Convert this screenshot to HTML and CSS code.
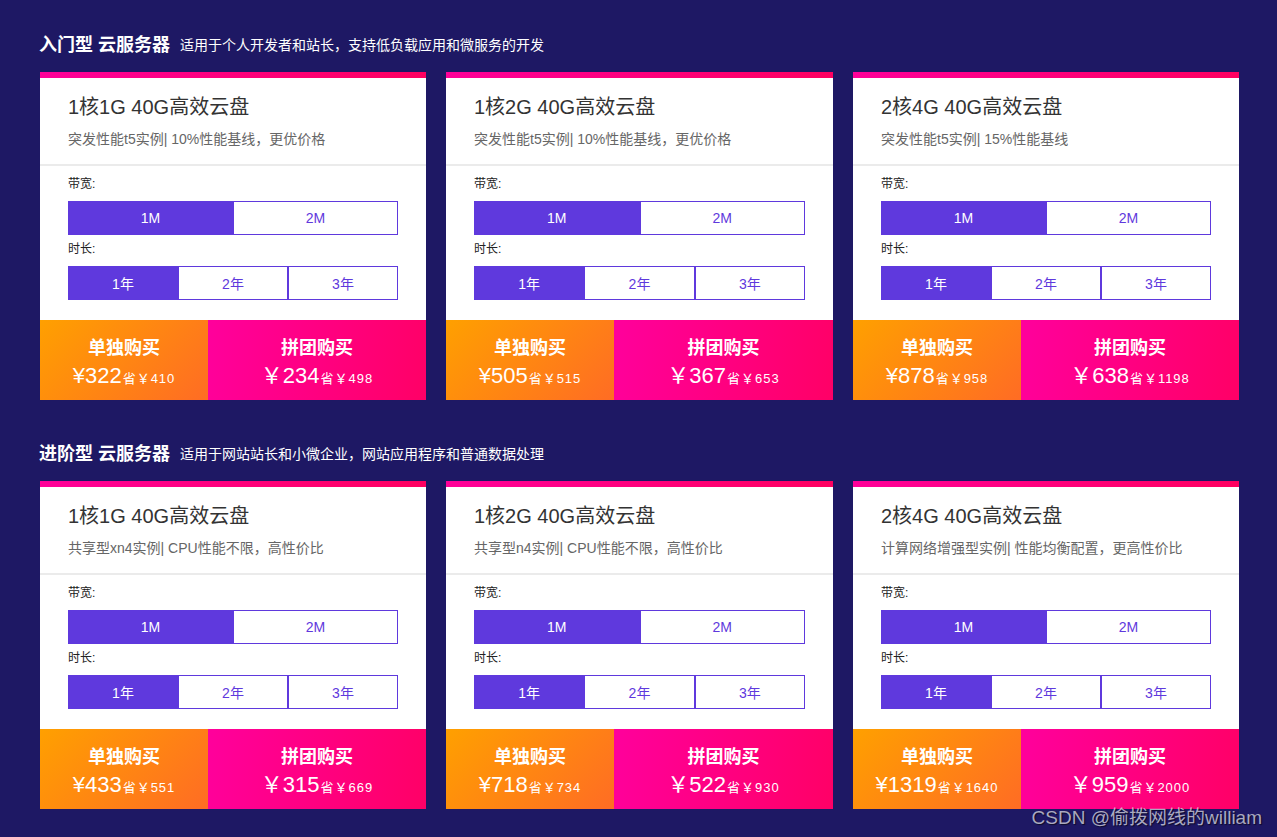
FILE: index.html
```html
<!DOCTYPE html>
<html lang="zh">
<head>
<meta charset="utf-8">
<title>云服务器</title>
<link rel="stylesheet" href="styles.css">
</head>
<body>
<div class="page">
  <section class="group">
    <h2 class="group-head"><span class="group-title">入门型 云服务器</span><span class="group-sub">适用于个人开发者和站长，支持低负载应用和微服务的开发</span></h2>
    <div class="cards">
      <div class="card">
        <div class="card-top">
          <div class="card-title">1核1G 40G高效云盘</div>
          <div class="card-desc">突发性能t5实例| 10%性能基线，更优价格</div>
        </div>
        <div class="card-opts">
          <div class="opt-label">带宽:</div>
          <div class="opt-row"><span class="opt on">1M</span><span class="opt">2M</span></div>
          <div class="opt-label">时长:</div>
          <div class="opt-row"><span class="opt on">1年</span><span class="opt">2年</span><span class="opt">3年</span></div>
        </div>
        <div class="buy">
          <div class="buy-one"><div class="buy-name">单独购买</div><div class="buy-price"><span class="big">¥322</span><span class="save">省￥410</span></div></div>
          <div class="buy-group"><div class="buy-name">拼团购买</div><div class="buy-price"><span class="big">￥234</span><span class="save">省￥498</span></div></div>
        </div>
      </div>
      <div class="card">
        <div class="card-top">
          <div class="card-title">1核2G 40G高效云盘</div>
          <div class="card-desc">突发性能t5实例| 10%性能基线，更优价格</div>
        </div>
        <div class="card-opts">
          <div class="opt-label">带宽:</div>
          <div class="opt-row"><span class="opt on">1M</span><span class="opt">2M</span></div>
          <div class="opt-label">时长:</div>
          <div class="opt-row"><span class="opt on">1年</span><span class="opt">2年</span><span class="opt">3年</span></div>
        </div>
        <div class="buy">
          <div class="buy-one"><div class="buy-name">单独购买</div><div class="buy-price"><span class="big">¥505</span><span class="save">省￥515</span></div></div>
          <div class="buy-group"><div class="buy-name">拼团购买</div><div class="buy-price"><span class="big">￥367</span><span class="save">省￥653</span></div></div>
        </div>
      </div>
      <div class="card">
        <div class="card-top">
          <div class="card-title">2核4G 40G高效云盘</div>
          <div class="card-desc">突发性能t5实例| 15%性能基线</div>
        </div>
        <div class="card-opts">
          <div class="opt-label">带宽:</div>
          <div class="opt-row"><span class="opt on">1M</span><span class="opt">2M</span></div>
          <div class="opt-label">时长:</div>
          <div class="opt-row"><span class="opt on">1年</span><span class="opt">2年</span><span class="opt">3年</span></div>
        </div>
        <div class="buy">
          <div class="buy-one"><div class="buy-name">单独购买</div><div class="buy-price"><span class="big">¥878</span><span class="save">省￥958</span></div></div>
          <div class="buy-group"><div class="buy-name">拼团购买</div><div class="buy-price"><span class="big">￥638</span><span class="save">省￥1198</span></div></div>
        </div>
      </div>
    </div>
  </section>

  <section class="group">
    <h2 class="group-head"><span class="group-title">进阶型 云服务器</span><span class="group-sub">适用于网站站长和小微企业，网站应用程序和普通数据处理</span></h2>
    <div class="cards">
      <div class="card">
        <div class="card-top">
          <div class="card-title">1核1G 40G高效云盘</div>
          <div class="card-desc">共享型xn4实例| CPU性能不限，高性价比</div>
        </div>
        <div class="card-opts">
          <div class="opt-label">带宽:</div>
          <div class="opt-row"><span class="opt on">1M</span><span class="opt">2M</span></div>
          <div class="opt-label">时长:</div>
          <div class="opt-row"><span class="opt on">1年</span><span class="opt">2年</span><span class="opt">3年</span></div>
        </div>
        <div class="buy">
          <div class="buy-one"><div class="buy-name">单独购买</div><div class="buy-price"><span class="big">¥433</span><span class="save">省￥551</span></div></div>
          <div class="buy-group"><div class="buy-name">拼团购买</div><div class="buy-price"><span class="big">￥315</span><span class="save">省￥669</span></div></div>
        </div>
      </div>
      <div class="card">
        <div class="card-top">
          <div class="card-title">1核2G 40G高效云盘</div>
          <div class="card-desc">共享型n4实例| CPU性能不限，高性价比</div>
        </div>
        <div class="card-opts">
          <div class="opt-label">带宽:</div>
          <div class="opt-row"><span class="opt on">1M</span><span class="opt">2M</span></div>
          <div class="opt-label">时长:</div>
          <div class="opt-row"><span class="opt on">1年</span><span class="opt">2年</span><span class="opt">3年</span></div>
        </div>
        <div class="buy">
          <div class="buy-one"><div class="buy-name">单独购买</div><div class="buy-price"><span class="big">¥718</span><span class="save">省￥734</span></div></div>
          <div class="buy-group"><div class="buy-name">拼团购买</div><div class="buy-price"><span class="big">￥522</span><span class="save">省￥930</span></div></div>
        </div>
      </div>
      <div class="card">
        <div class="card-top">
          <div class="card-title">2核4G 40G高效云盘</div>
          <div class="card-desc">计算网络增强型实例| 性能均衡配置，更高性价比</div>
        </div>
        <div class="card-opts">
          <div class="opt-label">带宽:</div>
          <div class="opt-row"><span class="opt on">1M</span><span class="opt">2M</span></div>
          <div class="opt-label">时长:</div>
          <div class="opt-row"><span class="opt on">1年</span><span class="opt">2年</span><span class="opt">3年</span></div>
        </div>
        <div class="buy">
          <div class="buy-one"><div class="buy-name">单独购买</div><div class="buy-price"><span class="big">¥1319</span><span class="save">省￥1640</span></div></div>
          <div class="buy-group"><div class="buy-name">拼团购买</div><div class="buy-price"><span class="big">￥959</span><span class="save">省￥2000</span></div></div>
        </div>
      </div>
    </div>
  </section>
  <div class="watermark">CSDN @偷拨网线的william</div>
</div>
</body>
</html>
```

FILE: styles.css
```css
* { box-sizing: border-box; }
html, body {
  margin: 0;
  padding: 0;
  background: #1e1864;
  height: 100%;
}
body {
  font-family: "Liberation Sans", "Noto Sans CJK SC", sans-serif;
  color: #333;
}
.page {
  position: relative;
  width: 1277px;
  height: 837px;
  padding: 31px 0 0 40px;
}
.group {
  width: 1200px;
  margin-bottom: 40px;
}
.group-head {
  margin: 0 0 17px 0;
  height: 24px;
  display: flex;
  align-items: center;
  font-weight: normal;
}
.group-title {
  font-size: 18px;
  font-weight: bold;
  color: #fff;
  margin-left: -1px;
}
.group-sub {
  font-size: 14px;
  color: #fff;
  margin-left: 10px;
  margin-top: 2px;
}
.cards {
  display: grid;
  grid-template-columns: 386px 387px 386px;
  column-gap: 20px;
}
.card {
  background: #fff;
  border-top: 6px solid #ff0090;
  border-image: linear-gradient(90deg, #ff0099, #ff0060) 1;
  border-left: 0;
  border-right: 0;
  border-bottom: 0;
}
.card-top {
  padding: 15px 28px 15px 28px;
  border-bottom: 2px solid #ebebeb;
}
.card-title {
  font-size: 20px;
  line-height: 28px;
  color: #333;
}
.card-desc {
  margin-top: 8px;
  font-size: 14px;
  line-height: 20px;
  color: #666;
}
.card-opts {
  padding: 9px 28px 20px 28px;
}
.opt-label {
  font-size: 12px;
  line-height: 18px;
  color: #222;
}
.opt-row {
  display: flex;
  margin: 8px 0 5px 0;
}
.opt-row:last-child { margin-bottom: 0; }
.opt {
  flex: 1;
  height: 34px;
  border: 1px solid #5f39dd;
  color: #5f39dd;
  background: #fff;
  display: flex;
  align-items: center;
  justify-content: center;
  font-size: 14px;
}
.opt.on {
  background: #5f39dd;
  color: #fff;
}
.buy {
  display: flex;
  height: 80px;
  color: #fff;
}
.buy-one {
  width: 168px;
  background: linear-gradient(135deg, #ffa000 0%, #ff6c24 100%);
}
.buy-group {
  flex: 1;
  background: linear-gradient(100deg, #ff009c 0%, #ff0066 100%);
}
.buy-one, .buy-group {
  display: flex;
  flex-direction: column;
  align-items: center;
  padding-top: 15px;
}
.buy-name {
  font-size: 18px;
  font-weight: bold;
  line-height: 26px;
}
.buy-price {
  display: flex;
  align-items: baseline;
  line-height: 28px;
  margin-top: 1px;
}
.big {
  font-size: 22px;
}
.save {
  font-size: 13px;
  letter-spacing: 1px;
  margin-left: 1px;
}
.watermark {
  position: absolute;
  right: 15px;
  bottom: 8px;
  font-size: 19px;
  color: rgba(220, 220, 230, 0.75);
  text-shadow: 1px 1px 1px rgba(0, 0, 0, 0.6);
}
```
